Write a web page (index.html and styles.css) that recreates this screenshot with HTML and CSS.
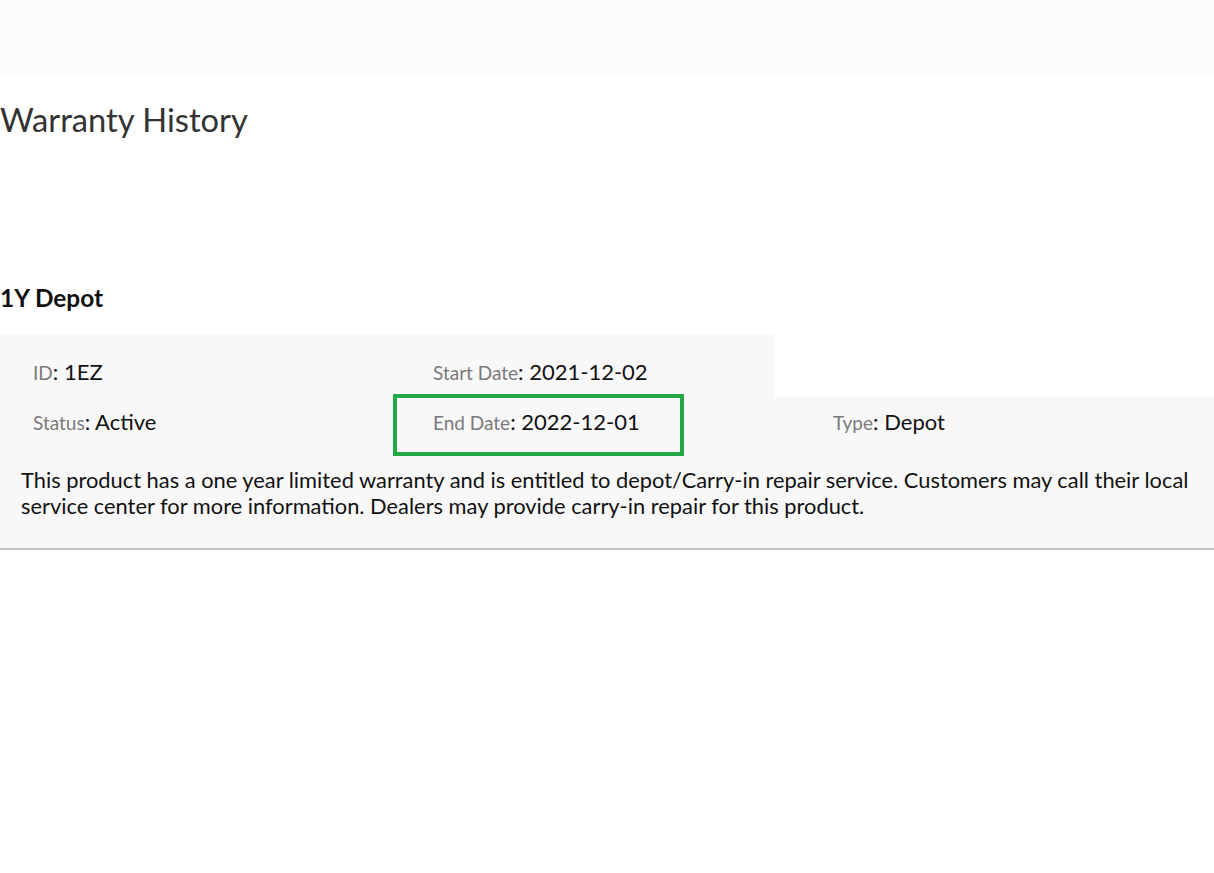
FILE: index.html
```html
<!DOCTYPE html>
<html lang="en">
<head>
  <meta charset="UTF-8" />
  <title>Warranty History</title>
  <link rel="stylesheet" href="styles.css">
</head>
<body>
  <header class="topbar"></header>

  <main class="page">
    <h1>Warranty History</h1>

    <!-- one block per warranty entry -->
    <section class="warranty">
      <h2>1Y Depot</h2>
      <div class="details">
        <div class="row row-top">
          <div class="field"><span class="label">ID</span>: 1EZ</div>
          <div class="field"><span class="label">Start Date</span>: 2021-12-02</div>
        </div>
        <div class="row">
          <div class="field"><span class="label">Status</span>: Active</div>
          <div class="field highlight"><span class="label">End Date</span>: 2022-12-01</div>
          <div class="field"><span class="label">Type</span>: Depot</div>
        </div>
        <p class="desc">This product has a one year limited warranty and is entitled to depot/Carry-in repair service. Customers may call their local service center for more information. Dealers may provide carry-in repair for this product.</p>
      </div>
    </section>
  </main>
</body>
</html>
```

FILE: styles.css
```css
:root {
  --bg-panel: #f8f8f8;
  --text: #111;
  --text-head: #333;
  --text-label: #7a7a7a;
  --mark: #23a847;
}
* { box-sizing: border-box; margin: 0; padding: 0; }
body {
  font-family: Lato, 'Open Sans', sans-serif;
  color: var(--text);
  background: #fff;
}
.topbar {
  height: 75px;
  background: #fcfcfc;
}
h1 {
  font-size: 32.7px;
  font-weight: 400;
  color: var(--text-head);
  line-height: 40px;
  margin-top: 25px;
}
.warranty { margin-top: 143px; }
h2 {
  font-size: 24.4px;
  font-weight: 700;
  line-height: 30px;
  margin-bottom: 22px;
}
.row {
  display: grid;
  grid-template-columns: 400px 400px 1fr;
  background: var(--bg-panel);
  height: 52px;
  align-items: center;
  padding-bottom: 2px;
}
.row-top {
  width: 775px;
  grid-template-columns: 400px 1fr;
  height: 62px;
  padding: 12px 0 0;
}
.row .field {
  padding-left: 33px;
  font-size: 22px;
  line-height: 28px;
}
.field .label {
  font-size: 19px;
  color: var(--text-label);
}
/* green outline around the end date */
.field.highlight { position: relative; }
.field.highlight::before {
  content: '';
  position: absolute;
  left: -7px;
  top: -14px;
  width: 283px;
  height: 54px;
  border: 4px solid var(--mark);
}
.desc {
  background: var(--bg-panel);
  font-size: 21.85px;
  line-height: 26px;
  padding: 18px 0 29px 21px;
  border-bottom: 2px solid #c4c4c4;
}
```
